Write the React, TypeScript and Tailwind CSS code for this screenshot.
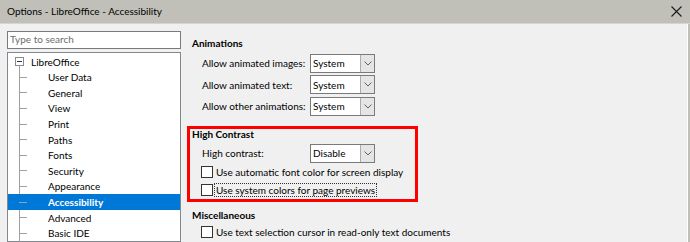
import React from "react";

const font = { fontFamily: 'Lato, "Noto Sans", sans-serif' };

function Dropdown({ value }: { value: string }) {
  return (
    <div className="flex h-[19px] w-[65px] border border-[#7a7a7a] bg-white">
      <div className="flex flex-1 items-center whitespace-nowrap pl-[2px] text-[10px] leading-none text-black">{value}</div>
      <div className="flex w-[14px] items-center justify-center border-l border-[#acacac] bg-[#e5e5e5]">
        <svg width="8" height="5" viewBox="0 0 8 5">
          <path d="M0.5 0.5 L4 4 L7.5 0.5" fill="none" stroke="#606060" strokeWidth="1" />
        </svg>
      </div>
    </div>
  );
}

function Checkbox({ label, focus }: { label: string; focus?: boolean }) {
  return (
    <div className="flex h-[15px] items-center">
      <div className="h-[12px] w-[12px] border border-[#333333] bg-white" />
      <div
        className={
          focus
            ? "ml-[1px] flex h-[14px] items-center whitespace-nowrap border border-dotted border-[#333] px-[1px] text-[10px] leading-none"
            : "ml-[3px] whitespace-nowrap text-[10px] leading-none"
        }
      >
        {label}
      </div>
    </div>
  );
}

const treeItems = [
  "User Data",
  "General",
  "View",
  "Print",
  "Paths",
  "Fonts",
  "Security",
  "Appearance",
  "Accessibility",
  "Advanced",
  "Basic IDE",
];

export default function App() {
  return (
    <div className="flex h-[242px] w-[690px] flex-col overflow-hidden bg-[#c1c0b8] text-black" style={font}>
      {/* Title bar */}
      <div className="flex h-[24px] items-center justify-between border-b border-[#d6d5cf] pl-[7px] pr-[8px]">
        <span className="whitespace-nowrap text-[10px]">Options - LibreOffice - Accessibility</span>
        <svg width="11" height="11" viewBox="0 0 11 11">
          <path d="M0.5 0.5 L10.5 10.5 M10.5 0.5 L0.5 10.5" stroke="#1a1a1a" strokeWidth="1.1" />
        </svg>
      </div>

      {/* Body */}
      <div className="mr-[2px] flex flex-1 border-r border-white bg-[#f0f0f0] pl-[7px]">
        {/* Left column */}
        <div className="flex w-[174px] flex-col pt-[7px]">
          <div className="flex h-[18px] items-center border border-[#7a7a7a] bg-white pl-[2px] text-[10px] text-[#6d6d6d]">
            Type to search
          </div>
          <div className="relative mt-[3px] flex-1 border border-[#828790] bg-white pt-[1px]">
            {/* vertical tree line */}
            <div className="absolute left-[11px] top-[13px] h-[200px] w-px bg-[#a0a0a0]" />
            <div className="flex h-[15.6px] items-center">
              <div className="ml-[7px] flex h-[9px] w-[9px] items-center justify-center border border-[#8a8a8a] bg-white">
                <div className="h-px w-[5px] bg-[#333]" />
              </div>
              <span className="ml-[7px] text-[10px] leading-none">LibreOffice</span>
            </div>
            {treeItems.map((t) => {
              const sel = t === "Accessibility";
              return (
                <div
                  key={t}
                  className={
                    "relative flex h-[15.6px] items-center " + (sel ? "bg-[#0078d7] text-white" : "")
                  }
                >
                  <div className="ml-[11px] h-px w-[8px] bg-[#a0a0a0]" />
                  <span className={"ml-[21px] text-[10px] leading-none " + (sel ? "font-bold" : "")}>{t}</span>
                </div>
              );
            })}
          </div>
        </div>

        {/* Right column */}
        <div className="ml-[11px] flex flex-col pt-[12px]">
          <div className="flex h-[14px] items-center text-[10px] font-bold leading-none">Animations</div>
          <div className="mt-[4px] flex flex-col gap-[2.5px]">
            {[
              "Allow animated images:",
              "Allow animated text:",
              "Allow other animations:",
            ].map((l) => (
              <div key={l} className="flex h-[19px] items-center pl-[10px]">
                <span className="w-[108px] whitespace-nowrap text-[10px] leading-none">{l}</span>
                <Dropdown value="System" />
              </div>
            ))}
          </div>

          <div className="relative mt-[11px]">
            <div className="pointer-events-none absolute left-[-5px] top-[-1px] h-[76px] w-[231px] border-[3px] border-[#ff0000]" />
            <div className="flex h-[14px] items-center text-[10px] font-bold leading-none">High Contrast</div>
            <div className="mt-[3px] flex h-[19px] items-center pl-[10px]">
              <span className="w-[108px] whitespace-nowrap text-[10px] leading-none">High contrast:</span>
              <Dropdown value="Disable" />
            </div>
            <div className="mt-[2px] pl-[9px]">
              <Checkbox label="Use automatic font color for screen display" />
            </div>
            <div className="mt-[3px] pl-[9px]">
              <Checkbox label="Use system colors for page previews" focus />
            </div>
          </div>

          <div className="mt-[10px] flex h-[14px] items-center text-[10px] font-bold leading-none">Miscellaneous</div>
          <div className="mt-[2.5px] pl-[9px]">
            <Checkbox label="Use text selection cursor in read-only text documents" />
          </div>
        </div>
      </div>
    </div>
  );
}
